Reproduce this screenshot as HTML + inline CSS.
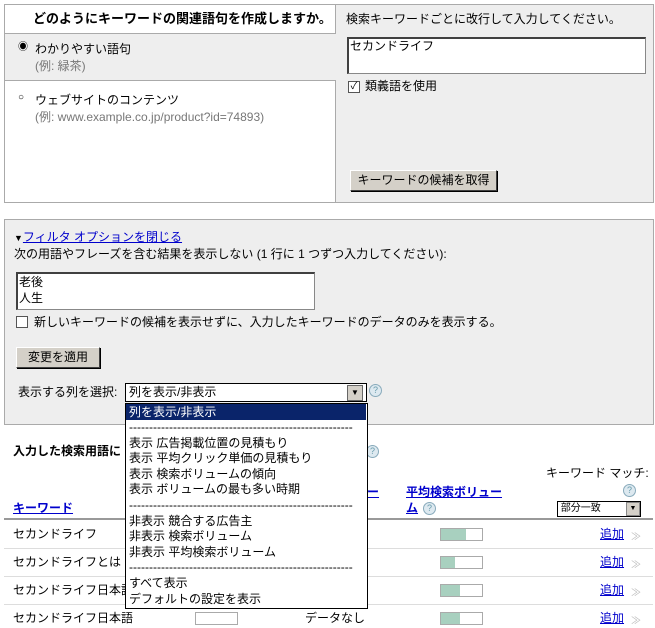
<!DOCTYPE html>
<html><head><meta charset="utf-8"><style>
body{margin:0;width:655px;height:628px;background:#fff;font-family:"Liberation Sans","Noto Sans CJK JP",sans-serif;font-size:12px;color:#000;position:relative;overflow:hidden}
.a{position:absolute;white-space:nowrap;line-height:14px}
.g{color:#777}
.lnk{color:#00c;text-decoration:underline}
.b{font-weight:bold}
.btn{position:absolute;background:#d4d0c8;border:1px solid;border-color:#fff #404040 #404040 #fff;box-shadow:1px 1px 0 #000;text-align:center;line-height:19px;font-size:12px}
.ta{position:absolute;background:#fff;border:1px solid #888;border-top:2px solid #404040;border-left:2px solid #404040}
.cb{position:absolute;width:10px;height:10px;border:1px solid #555;background:#fff}
.help{position:absolute;width:11px;height:11px;border:1px solid #8ab;border-radius:50%;background:#dde9f0;color:#69a;font-size:9px;line-height:11px;text-align:center}
.bar{position:absolute;width:41px;height:11px;border:1px solid #aaa;background:#fff}
.bar i{position:absolute;left:0;top:0;bottom:0;background:#a8d0bf}
.hr{position:absolute;left:4px;width:649px;height:1px;background:#ddd}
.chev{position:absolute;color:#bbb;font-size:10px}
</style></head><body>
<div style="position:absolute;left:4px;top:4px;width:648px;height:197px;border:1px solid #aaa;background:#eee"></div>
<div style="position:absolute;left:5px;top:5px;width:330px;height:28px;background:#fff;border-bottom:1px solid #aaa;border-right:1px solid #aaa"></div>
<div style="position:absolute;left:5px;top:80px;width:330px;height:121px;background:#fff;border-top:1px solid #aaa;border-right:1px solid #aaa"></div>
<div class="a b" style="left:33px;top:12px;font-size:13px">どのようにキーワードの関連語句を作成しますか。</div>
<div class="a" style="left:346px;top:12px">検索キーワードごとに改行して入力してください。</div>
<div class="a" style="left:18px;top:41px;font-size:10px">◉</div>
<div class="a" style="left:35px;top:42px">わかりやすい語句</div>
<div class="a g" style="left:35px;top:59px">(例: 緑茶)</div>
<div class="a" style="left:18px;top:91px;font-size:10px">○</div>
<div class="a" style="left:35px;top:93px">ウェブサイトのコンテンツ</div>
<div class="a g" style="left:35px;top:110px">(例: www.example.co.jp/product?id=74893)</div>
<div class="ta" style="left:347px;top:37px;width:296px;height:34px"></div>
<div class="a" style="left:350px;top:39px">セカンドライフ</div>
<div class="cb" style="left:348px;top:81px;font-size:10px;line-height:10px;text-align:center">✓</div>
<div class="a" style="left:365px;top:79px">類義語を使用</div>
<div class="btn" style="left:350px;top:170px;width:145px;height:19px">キーワードの候補を取得</div>
<div style="position:absolute;left:4px;top:219px;width:648px;height:204px;border:1px solid #aaa;background:#eee"></div>
<div class="a" style="left:14px;top:230px"><span style="font-size:9px">▼</span><span class="lnk">フィルタ オプションを閉じる</span></div>
<div class="a" style="left:14px;top:247px">次の用語やフレーズを含む結果を表示しない (1 行に 1 つずつ入力してください):</div>
<div class="ta" style="left:16px;top:272px;width:296px;height:35px"></div>
<div class="a" style="left:19px;top:274px;line-height:16px">老後<br>人生</div>
<div class="cb" style="left:16px;top:316px"></div>
<div class="a" style="left:34px;top:315px">新しいキーワードの候補を表示せずに、入力したキーワードのデータのみを表示する。</div>
<div class="btn" style="left:16px;top:347px;width:82px;height:19px">変更を適用</div>
<div class="a" style="left:18px;top:385px">表示する列を選択:</div>
<div style="position:absolute;left:125px;top:383px;width:240px;height:17px;background:#fff;border:1px solid #000"></div>
<div class="a" style="left:129px;top:385px">列を表示/非表示</div>
<div style="position:absolute;left:347px;top:385px;width:14px;height:14px;background:#d4d0c8;border:1px solid #666;font-size:8px;text-align:center;line-height:14px">▼</div>
<div class="help" style="left:369px;top:384px">?</div>
<div class="a b" style="left:13px;top:444px">入力した検索用語に</div>
<div class="help" style="left:366px;top:445px">?</div>
<div class="a" style="left:546px;top:466px">キーワード マッチ:</div>
<div class="help" style="left:623px;top:484px">?</div>
<div style="position:absolute;left:557px;top:501px;width:82px;height:14px;background:#fff;border:1px solid #000;font-size:10px;line-height:14px">&nbsp;部分一致</div>
<div style="position:absolute;left:626px;top:502px;width:12px;height:12px;background:#d4d0c8;border:1px solid #888;font-size:7px;text-align:center;line-height:12px">▼</div>
<div class="a b lnk" style="left:13px;top:501px">キーワード</div>
<div class="a b lnk" style="left:355px;top:485px">ュー</div>
<div class="a b lnk" style="left:406px;top:485px">平均検索ボリュー</div>
<div class="a b lnk" style="left:406px;top:501px">ム</div>
<div class="help" style="left:423px;top:502px">?</div>
<div style="position:absolute;left:4px;top:518px;width:649px;height:2px;background:#999"></div>
<div class="hr" style="top:548px"></div><div class="hr" style="top:576px"></div><div class="hr" style="top:604px"></div>
<div class="a" style="left:13px;top:527px">セカンドライフ</div>
<div class="a" style="left:13px;top:555px">セカンドライフとは</div>
<div class="a" style="left:13px;top:583px">セカンドライフ日本語</div>
<div class="a" style="left:13px;top:611px">セカンドライフ日本語</div>
<div style="position:absolute;left:195px;top:612px;width:41px;height:11px;border:1px solid #aaa"></div>
<div class="a" style="left:305px;top:611px">データなし</div>
<div class="bar" style="left:440px;top:528px"><i style="width:25px"></i></div>
<div class="bar" style="left:440px;top:556px"><i style="width:14px"></i></div>
<div class="bar" style="left:440px;top:584px"><i style="width:19px"></i></div>
<div class="bar" style="left:440px;top:612px"><i style="width:19px"></i></div>
<div class="a lnk" style="left:600px;top:527px">追加</div><div class="chev" style="left:631px;top:528px">≫</div>
<div class="a lnk" style="left:600px;top:555px">追加</div><div class="chev" style="left:631px;top:556px">≫</div>
<div class="a lnk" style="left:600px;top:583px">追加</div><div class="chev" style="left:631px;top:584px">≫</div>
<div class="a lnk" style="left:600px;top:611px">追加</div><div class="chev" style="left:631px;top:612px">≫</div>
<div style="position:absolute;left:125px;top:403px;width:241px;height:204px;background:#fff;border:1px solid #000"></div>
<div style="position:absolute;left:126px;top:404px;width:240px;height:16px;background:#0a246a"></div>
<div class="a" style="left:129px;top:405px;color:#fff">列を表示/非表示</div>
<div class="a" style="left:129px;top:420px;line-height:15.6px">--------------------------------------------------------<br>表示 広告掲載位置の見積もり<br>表示 平均クリック単価の見積もり<br>表示 検索ボリュームの傾向<br>表示 ボリュームの最も多い時期<br>--------------------------------------------------------<br>非表示 競合する広告主<br>非表示 検索ボリューム<br>非表示 平均検索ボリューム<br>--------------------------------------------------------<br>すべて表示<br>デフォルトの設定を表示</div>
</body></html>
